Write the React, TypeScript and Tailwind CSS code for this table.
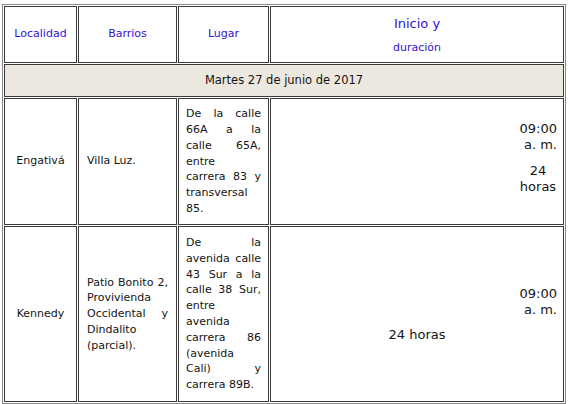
import React from "react";

type Line = [string, boolean];

// each line is a separate block so the breaks match; true = justified line
function Lines({ lines }: { lines: Line[] }) {
  return (
    <div className="leading-[15.8px]">
      {lines.map(([t, j], i) => (
        <div key={i} className={j ? "whitespace-nowrap [text-align-last:justify] text-justify" : "whitespace-nowrap text-left"}>
          {t}
        </div>
      ))}
    </div>
  );
}

const lugar1: Line[] = [
  ["De la calle", true],
  ["66A a la", true],
  ["calle 65A,", true],
  ["entre", false],
  ["carrera 83 y", true],
  ["transversal", false],
  ["85.", false],
];

const lugar2: Line[] = [
  ["De la", true],
  ["avenida calle", true],
  ["43 Sur a la", true],
  ["calle 38 Sur,", true],
  ["entre", false],
  ["avenida", false],
  ["carrera 86", true],
  ["(avenida", false],
  ["Cali) y", true],
  ["carrera 89B.", false],
];

const barrios2: Line[] = [
  ["Patio Bonito 2,", true],
  ["Provivienda", false],
  ["Occidental y", true],
  ["Dindalito", false],
  ["(parcial).", false],
];

const cell = "border border-[#3a3a3a] align-middle p-0";

export default function App() {
  return (
    <div className="min-h-[404px] bg-white pt-[4px] pl-[2px] font-['DejaVu_Sans',sans-serif] text-[11px] text-[#141414]">
      <table className="w-[564px] table-fixed border-separate border-spacing-[1px] border border-[#8a8a8a]">
        <thead>
          <tr className="h-[57px]">
            <th className={`${cell} w-[73px] font-normal text-center text-[#3311dd]`}>Localidad</th>
            <th className={`${cell} w-[99px] font-normal text-center text-[#3311dd]`}>Barrios</th>
            <th className={`${cell} w-[91px] font-normal text-center text-[#3311dd]`}>Lugar</th>
            <th className={`${cell} w-[294px] font-normal text-center text-[#3311dd] leading-[24px]`}>
              <div className="pt-[2px] text-[13px]">Inicio y</div>
              <div>duración</div>
            </th>
          </tr>
        </thead>
        <tbody>
          <tr className="h-[33px]">
            <td colSpan={4} className={`${cell} bg-[#ece8e0] text-center text-[11.5px]`}>
              Martes 27 de junio de 2017
            </td>
          </tr>
          <tr className="h-[127px]">
            <td className={`${cell} text-center`}>Engativá</td>
            <td className={`${cell} px-[8px] text-left`}>Villa Luz.</td>
            <td className={`${cell} px-[7px]`}>
              <Lines lines={lugar1} />
            </td>
            <td className={`${cell} pr-[6px]`}>
              <div className="flex flex-col items-end pb-[8px] text-[13px] leading-[16px]">
                <div className="w-[38px]">
                  <div className="text-right">09:00</div>
                  <div className="text-right">a. m.</div>
                  <div className="mt-[10px] text-center">24</div>
                  <div className="text-center">horas</div>
                </div>
              </div>
            </td>
          </tr>
          <tr className="h-[176px]">
            <td className={`${cell} text-center`}>Kennedy</td>
            <td className={`${cell} px-[8px]`}>
              <Lines lines={barrios2} />
            </td>
            <td className={`${cell} px-[7px]`}>
              <Lines lines={lugar2} />
            </td>
            <td className={`${cell} pr-[6px]`}>
              <div className="flex flex-col text-[13px] leading-[16px]">
                <div className="self-end w-[38px] text-right">
                  <div>09:00</div>
                  <div>a. m.</div>
                </div>
                <div className="mt-[9px] pl-[6px] text-center">24 horas</div>
              </div>
            </td>
          </tr>
        </tbody>
      </table>
    </div>
  );
}
